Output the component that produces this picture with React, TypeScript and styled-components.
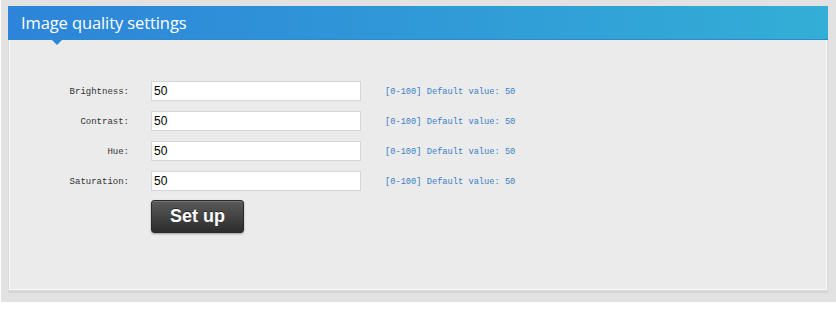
import React from "react";
import styled, { createGlobalStyle } from "styled-components";

const Global = createGlobalStyle`
  html, body { margin: 0; padding: 0; background: #ffffff; }
  body { font-family: "Liberation Sans", Arial, sans-serif; }
`;

const Page = styled.div`
  box-sizing: border-box;
  margin-left: 1px;
  width: 835px;
  height: 302px;
  background: #e2e2e2;
  padding: 6px 0 0 7px;
`;

const Panel = styled.section`
  box-sizing: border-box;
  width: 820px;
  height: 285px;
  background: #ebebeb;
  border: 1px solid #d9d9d9;
  border-top: none;
  box-shadow: inset 1px 0 0 #fafafa, inset -1px 0 0 #fafafa, inset 0 -1px 0 #fafafa, 0 2px 0 #d6d6d6;
  display: flex;
  flex-direction: column;
`;

const Header = styled.header`
  position: relative;
  box-sizing: border-box;
  height: 34px;
  margin: 0 -1px;
  background: linear-gradient(to right, #2d84d9, #33aed6);
  border-bottom: 1px solid #2a8cc8;
  display: flex;
  align-items: center;
  padding-left: 13px;
  color: #ffffff;
  font-family: "Open Sans", "Noto Sans", sans-serif;
  font-size: 16.5px;
  letter-spacing: -0.1px;
  &::after {
    content: "";
    position: absolute;
    left: 43px;
    bottom: -6px;
    border-left: 6px solid transparent;
    border-right: 6px solid transparent;
    border-top: 6px solid #2e88d6;
  }
`;

const Form = styled.div`
  display: grid;
  grid-template-columns: 120px 210px auto;
  column-gap: 22px;
  row-gap: 10px;
  align-items: center;
  padding-top: 41px;
`;

const Label = styled.label`
  text-align: right;
  padding-top: 2px;
  font-family: "Liberation Mono", "DejaVu Sans Mono", monospace;
  font-size: 9px;
  color: #333333;
`;

const Input = styled.input`
  box-sizing: border-box;
  width: 210px;
  height: 20px;
  border: 1px solid #d6d6d6;
  background: #ffffff;
  padding: 0 2px;
  font-family: "Liberation Sans", Arial, sans-serif;
  font-size: 12px;
  color: #000;
  outline: none;
`;

const Hint = styled.span`
  padding-top: 2px;
  font-family: "Liberation Mono", "DejaVu Sans Mono", monospace;
  font-size: 8.7px;
  color: #3a80c6;
  margin-left: 2px;
`;

const ButtonRow = styled.div`
  padding: 9px 0 0 142px;
`;

const Button = styled.button`
  box-sizing: border-box;
  width: 93px;
  height: 33px;
  border: 1px solid #2a2a2a;
  border-radius: 3px;
  background: linear-gradient(to bottom, #5a5a5a, #2c2c2c);
  box-shadow: 0 1px 2px rgba(0, 0, 0, 0.35), inset 0 1px 0 rgba(255, 255, 255, 0.15);
  color: #ffffff;
  font-family: "Liberation Sans", Arial, sans-serif;
  font-weight: bold;
  font-size: 18px;
  text-shadow: 0 -1px 0 rgba(0, 0, 0, 0.5);
  padding: 0;
  cursor: pointer;
`;

const fields = ["Brightness:", "Contrast:", "Hue:", "Saturation:"];

export default function App() {
  return (
    <>
      <Global />
      <Page>
        <Panel>
          <Header>Image quality settings</Header>
          <Form>
            {fields.map((f) => (
              <React.Fragment key={f}>
                <Label>{f}</Label>
                <Input defaultValue="50" />
                <Hint>[0-100] Default value: 50</Hint>
              </React.Fragment>
            ))}
          </Form>
          <ButtonRow>
            <Button>Set up</Button>
          </ButtonRow>
        </Panel>
      </Page>
    </>
  );
}
